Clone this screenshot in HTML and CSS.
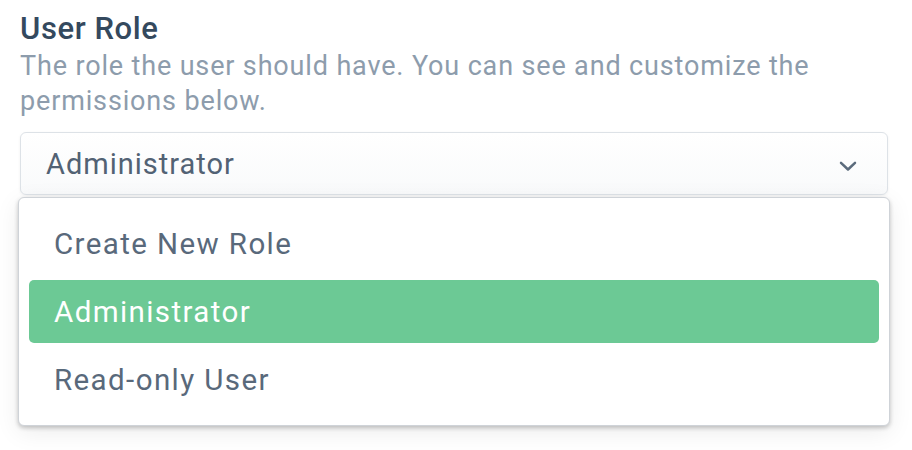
FILE: index.html
```html
<!DOCTYPE html>
<html>
<head>
<meta charset="utf-8">
<link rel="stylesheet" href="styles.css">
</head>
<body>
<div class="field">
  <div class="label">User Role</div>
  <div class="help">The role the user should have. You can see and customize the permissions below.</div>
  <div class="select-wrap">
    <div class="select">
      <span class="value">Administrator</span>
      <svg class="chevron" width="18" height="11" viewBox="0 0 18 11"><path d="M2 1.8 L9 8.5 L16 1.8" fill="none" stroke="#5b6b7c" stroke-width="2.5" stroke-linecap="round" stroke-linejoin="round"/></svg>
    </div>
    <ul class="menu">
      <li class="option">Create New Role</li>
      <li class="option selected">Administrator</li>
      <li class="option">Read-only User</li>
    </ul>
  </div>
</div>
</body>
</html>
```
FILE: styles.css
```css
html, body {
  margin: 0;
  padding: 0;
  background: #ffffff;
}
body {
  font-family: Roboto, "Liberation Sans", sans-serif;
  width: 912px;
  height: 450px;
  overflow: hidden;
}
.field {
  padding: 12px 24px 0 20px;
}
.label {
  font-size: 31px;
  font-weight: 500;
  line-height: 33px;
  letter-spacing: 0.6px;
  color: #34495e;
}
.help {
  margin-top: 4px;
  font-size: 27px;
  line-height: 35px;
  letter-spacing: 0.85px;
  color: #8d9cac;
  padding-right: 40px;
}
.select-wrap {
  margin-top: 13px;
}
.select {
  height: 61px;
  border: 1px solid #dde2e7;
  border-radius: 6px;
  background: linear-gradient(#ffffff, #f9fafb);
  display: flex;
  align-items: center;
  justify-content: space-between;
  padding: 0 30px 0 25px;
  box-shadow: 0 1px 3px rgba(0,0,0,0.06);
}
.value {
  font-size: 29px;
  letter-spacing: 1px;
  color: #526274;
}
.chevron {
  display: block;
  margin-top: 6px;
}
.menu {
  list-style: none;
  margin: 2px -2px 0 -2px;
  padding: 14px 10px 14px 10px;
  background: #ffffff;
  border: 1px solid #cfd3d8;
  border-radius: 6px;
  box-shadow: 0 2px 4px rgba(0,0,0,0.22), 0 6px 24px rgba(0,0,0,0.08);
  display: flex;
  flex-direction: column;
  gap: 5px;
}
.option {
  height: 63px;
  display: flex;
  align-items: center;
  padding: 0 25px;
  font-size: 29.5px;
  letter-spacing: 1.4px;
  color: #59697b;
  border-radius: 5px;
}
.option.selected {
  background: #6cc995;
  color: #ffffff;
}
```
